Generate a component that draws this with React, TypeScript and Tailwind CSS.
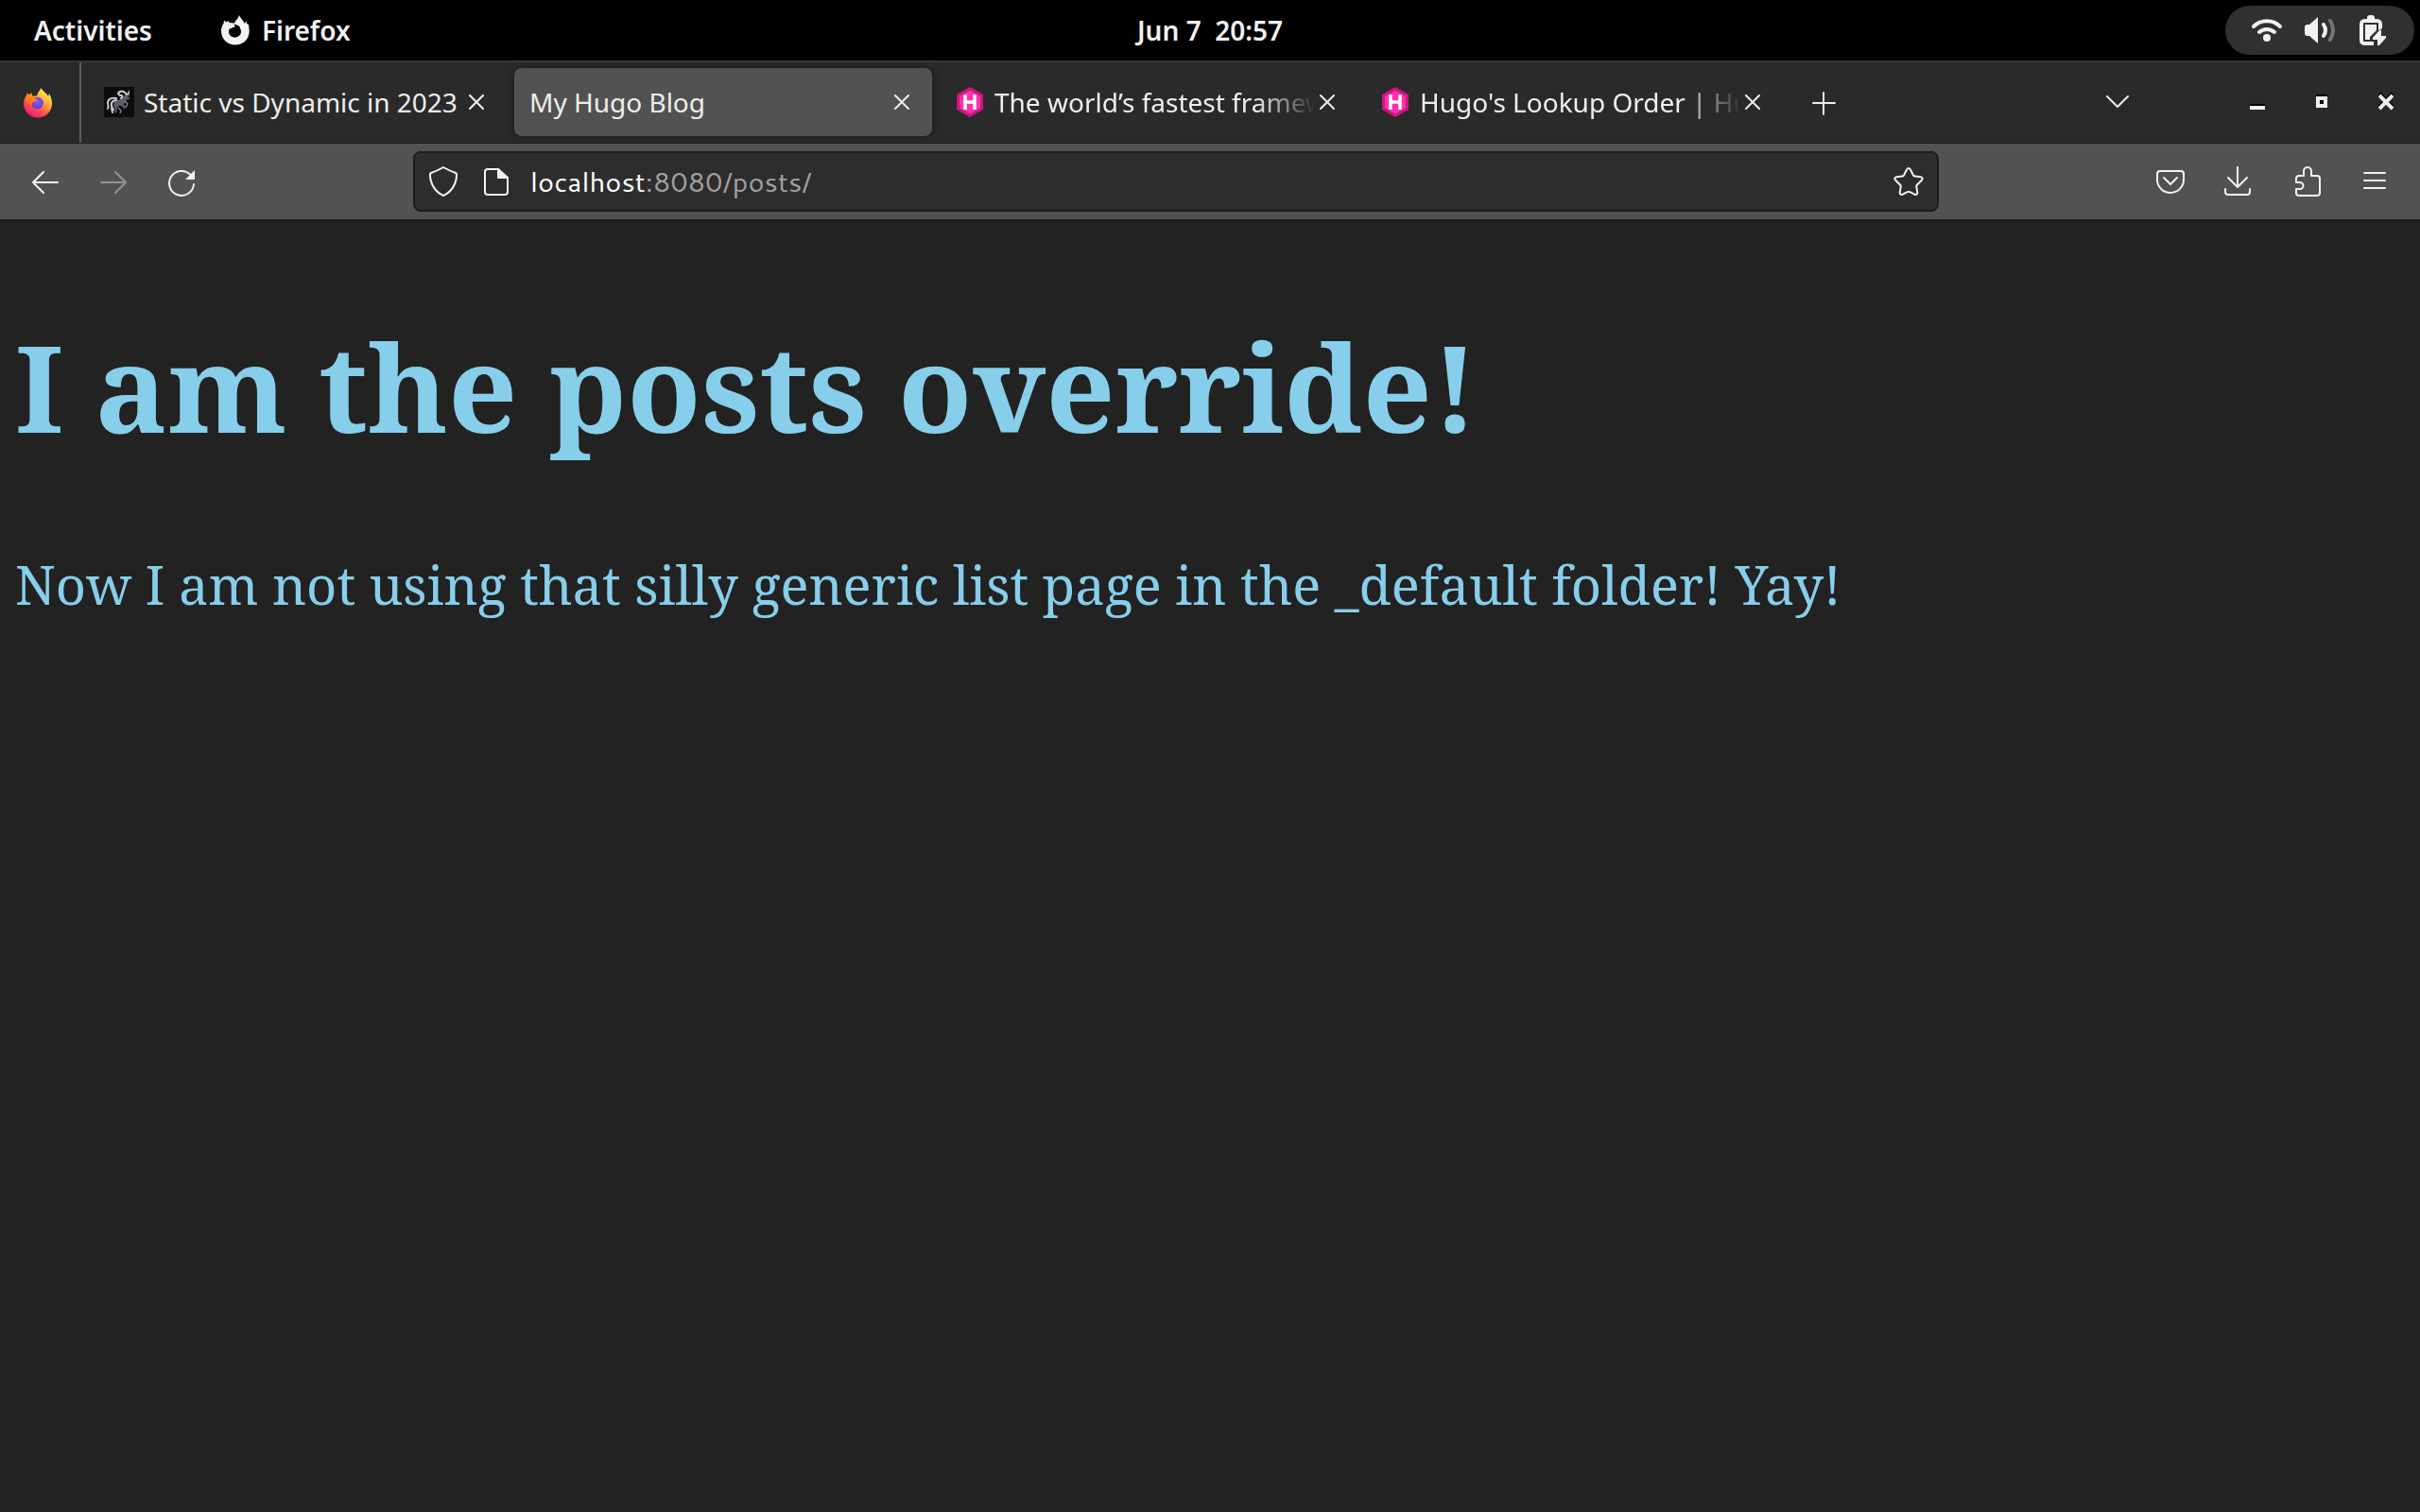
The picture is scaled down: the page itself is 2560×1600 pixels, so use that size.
import type { ReactNode } from 'react';

const tabs = [
  { title: 'Static vs Dynamic in 2023', icon: 'unicorn', active: false, fade: false },
  { title: 'My Hugo Blog', icon: null, active: true, fade: false },
  { title: 'The world’s fastest framework', icon: 'hugo', active: false, fade: true },
  { title: "Hugo's Lookup Order | Hugo", icon: 'hugo', active: false, fade: true },
];

function FirefoxLogo() {
  return (
    <svg viewBox="0 0 32 32" className="size-8">
      <defs>
        <linearGradient id="fx-body" x1="0.85" y1="0.1" x2="0.3" y2="1">
          <stop offset="0" stopColor="#fff44f" />
          <stop offset="0.4" stopColor="#ffa436" />
          <stop offset="0.7" stopColor="#ff4a4f" />
          <stop offset="1" stopColor="#e8177f" />
        </linearGradient>
        <radialGradient id="fx-globe" cx="0.5" cy="0.4" r="0.6">
          <stop offset="0" stopColor="#9059ff" />
          <stop offset="1" stopColor="#5b3fc9" />
        </radialGradient>
        <linearGradient id="fx-head" x1="0" y1="0" x2="0" y2="1">
          <stop offset="0" stopColor="#ff980e" />
          <stop offset="1" stopColor="#ff6a2f" />
        </linearGradient>
      </defs>
      <path
        fill="url(#fx-body)"
        d="M4 8 5 5.500 7 7.500 9 5.500 10 8.500 15 8.500C15.500 5 18 3.500 19.500 0c1.500 3.500 6 5.500 7.500 9l1-3c2 3.500 3 7 3 10.500C31 25 24.500 31.500 16 31.500S1 25 1 16.500C1 13 2 10.500 4 8Z"
      />
      <circle cx="15.500" cy="16" r="6.300" fill="url(#fx-globe)" />
      <path fill="url(#fx-head)" d="M3 12 5 6l2 2 3-2.500V9l6 4c-1 1.500-3 1.500-4.500 2-1.500.600-1.500 2.500-2.500 3.500-2-1.500-5-3-6-6.500Z" />
    </svg>
  );
}

function FirefoxSymbol() {
  return (
    <svg viewBox="0 0 32 32" className="size-8">
      <path
        fill="#f2f2f2"
        fillRule="evenodd"
        d="M3.500 9 4 5.500 6.500 7.500 8.500 6l1 2 5.500.500C16 5.500 19 4 20 0c1.500 3.500 4.500 6 6 9l1.500-3 .500 3 2 1 .500 4c1.500 10-5.500 17.500-14.500 17.500S1 25 1 16.500C1 13.500 2 11 3.500 9ZM15 12.500l-5 2c-1 1-1 2-1 3.500 0 3 3 5.500 6.500 5.500s6.500-2.500 6.500-6c0-2-.600-3.500-2-4.500l1.200.200C20 11 17.500 9.800 14 9.800l2 2Z"
      />
    </svg>
  );
}

function Unicorn() {
  return (
    <svg viewBox="0 0 32 32" className="size-8 shrink-0">
      <rect width="32" height="32" fill="#0c0c0c" />
      <path
        d="M11 15c4-2 7-1 9-3l2-4 4 2 1.500 3-4 .500c-.500 2.500-1.500 4-3 5l2.500 2-2 4-1-3.500-4-1.500-2 3-1 5-2-.500 1-4-2-3Z"
        fill="#5e5c69"
      />
      <path d="m24 8 3-5-.500 6Z" fill="#d2d2d6" />
      <path
        d="M24 8c-2-3-5-4-7-3-3 1-2 4 1 4 2 0 2 2 0 3M13 12c-4-1-8 0-9 4-.500 3 2 4 0 7M13 14c-3 0-6 2-5 6 .500 2 1 3 2 4M8 22l1 5"
        fill="none"
        stroke="#cfd0d8"
        strokeWidth="2"
        strokeLinecap="round"
      />
      <path d="M15 22l3 3-1 3M22 15l3 3-2 4" fill="none" stroke="#7a7885" strokeWidth="1.500" />
    </svg>
  );
}

function Hugo() {
  return (
    <svg viewBox="0 0 32 32" className="size-8 shrink-0">
      <path d="M16 0 30 8v16l-14 8L2 24V8Z" fill="#c9177e" />
      <path d="M16 3.500 27 9.800v12.400l-11 6.300-11-6.300V9.800Z" fill="#ff2fae" />
      <path d="M11 8v16M21 8v16M11 16h10" stroke="#fff" strokeWidth="3.500" fill="none" />
    </svg>
  );
}

function Line({ children }: { children: ReactNode }) {
  return (
    <svg
      viewBox="0 0 32 32"
      className="size-8"
      fill="none"
      stroke="currentColor"
      strokeWidth="2"
      strokeLinecap="round"
      strokeLinejoin="round"
    >
      {children}
    </svg>
  );
}

function TopBar() {
  return (
    <header className="grid h-16 grid-cols-3 items-center bg-black text-[28px] font-semibold text-[#f2f2f2]">
      <div className="flex items-center gap-[72px] pl-9">
        <button>Activities</button>
        <button className="flex items-center gap-3">
          <FirefoxSymbol />
          Firefox
        </button>
      </div>
      <button className="justify-self-center whitespace-pre">Jun 7  20:57</button>
      <button className="mr-[6px] flex h-[52px] items-center gap-6 justify-self-end rounded-full bg-[#303030] px-7" aria-label="System">
        <svg viewBox="0 0 32 32" className="size-8" fill="none" stroke="#f2f2f2" strokeWidth="4" strokeLinecap="round">
          <path d="M2 12a20 20 0 0 1 28 0M8 18a12 12 0 0 1 16 0" />
          <circle cx="16" cy="24" r="4" fill="#f2f2f2" stroke="none" />
        </svg>
        <svg viewBox="0 0 32 32" className="size-8" fill="none" stroke="#f2f2f2" strokeLinecap="round">
          <path d="M0 13q0-3 3-3h2l9-8v28l-9-8H3q-3 0-3-3Z" fill="#f2f2f2" stroke="none" />
          <path d="M20 10q4 6 0 12" strokeWidth="4" />
          <path d="M27 6q6 10 0 20" strokeWidth="4" stroke="#757575" />
        </svg>
        <svg viewBox="0 0 32 32" className="size-8">
          <path d="M10 3q0-3 3-3h2q3 0 3 3v1h2q6 0 6 6v4l-4 2V9q0-1-1-1H7Q6 8 6 9v18q0 1 1 1h10v4H8q-6 0-6-6V10q0-6 6-6h2Z" fill="#f2f2f2" />
          <path d="M8 10h12v6l-7 7v3H8Z" fill="#f2f2f2" />
          <path d="m24 15-8 9v2h5v6h2l7-8v-2h-5v-6Z" fill="#f2f2f2" />
        </svg>
      </button>
    </header>
  );
}

function Tab({ tab }: { tab: (typeof tabs)[number] }) {
  return (
    <div
      className={`flex h-[72px] w-[442px] items-center rounded-lg pr-6 pl-4 ${
        tab.active ? 'bg-[#525252] shadow-[0_0_8px_rgba(0,0,0,0.4)]' : ''
      }`}
    >
      <button className="flex min-w-0 flex-1 items-center gap-[10px] text-left">
        {tab.icon === 'unicorn' && <Unicorn />}
        {tab.icon === 'hugo' && <Hugo />}
        <span
          className={`min-w-0 flex-1 overflow-hidden whitespace-nowrap ${
            tab.fade ? '[mask-image:linear-gradient(to_left,transparent,black_64px)]' : ''
          }`}
        >
          {tab.title}
        </span>
      </button>
      <button className="ml-1" aria-label={`Close ${tab.title}`}>
        <svg viewBox="0 0 16 16" className="size-4" stroke="currentColor" strokeWidth="2" strokeLinecap="round">
          <path d="m1 1 14 14M15 1 1 15" />
        </svg>
      </button>
    </div>
  );
}

function TabStrip() {
  return (
    <div className="flex h-[88px] items-stretch border-t-2 border-b border-t-[#383838] border-b-[#1c1c1c] bg-[#2a2a2a] text-[28px] text-[#eeeeec]">
      <button className="w-[86px] border-r-2 border-[#5c5c5c] pl-6" aria-label="Firefox">
        <FirefoxLogo />
      </button>
      <nav className="flex items-start gap-2 pt-[6px] pl-2">
        {tabs.map((tab) => (
          <Tab key={tab.title} tab={tab} />
        ))}
      </nav>
      <button className="ml-[27px]" aria-label="New tab">
        <Line>
          <path d="M16 5v23M5 16h23" />
        </Line>
      </button>
      <div className="ml-auto flex items-center pr-7 pb-[2px]">
        <button className="mr-32" aria-label="List all tabs">
          <svg viewBox="0 0 24 16" className="h-4 w-6" fill="none" stroke="currentColor" strokeWidth="2" strokeLinecap="round" strokeLinejoin="round">
            <path d="M1 2 12 13 23 2" />
          </svg>
        </button>
        <button className="mr-[54px]" aria-label="Minimize">
          <svg viewBox="0 0 16 20" className="h-5 w-4">
            <path d="M0 12h16v2H0Z" fill="#000" />
            <path d="M0 14h16v4H0Z" fill="currentColor" />
          </svg>
        </button>
        <button className="mr-[54px]" aria-label="Maximize">
          <svg viewBox="0 0 12 20" className="h-5 w-3">
            <path d="M0 2h12v2H0ZM4 8h4v4H4Z" fill="#000" />
            <path d="M0 4h12v12H0ZM4 8v4h4V8Z" fill="currentColor" fillRule="evenodd" />
          </svg>
        </button>
        <button aria-label="Close window">
          <svg viewBox="0 0 16 20" className="h-5 w-4" fill="none" strokeWidth="4">
            <path d="m1 1 14 14M15 1 1 15" stroke="#000" />
            <path d="m1 3 14 14M15 3 1 17" stroke="currentColor" />
          </svg>
        </button>
      </div>
    </div>
  );
}

function Toolbar() {
  return (
    <div className="flex h-20 items-center bg-[#525252] text-[#f2f2f2]">
      <div className="flex w-[437px] shrink-0 items-center gap-10 pl-8">
        <button aria-label="Back">
          <Line>
            <path d="M3 17h26M14 6 3 17l11 11" />
          </Line>
        </button>
        <button aria-label="Forward" disabled className="text-[#929292]">
          <Line>
            <path d="M3 17h26M18 6l11 11-11 11" />
          </Line>
        </button>
        <button aria-label="Reload">
          <Line>
            <path d="M25 8.500A13 13 0 1 0 29 19" />
            <path d="M30 4v10H20Z" fill="currentColor" stroke="none" />
          </Line>
        </button>
      </div>
      <form className="flex h-16 min-w-0 flex-1 items-center rounded-lg border-2 border-[#1c1c1c] bg-[#2d2d2d] px-[14px]">
        <button type="button" aria-label="Tracking protection">
          <Line>
            <path d="M16 1Q23 5 29 7q1 0 1 2c0 9-5 18-14 22C7 27 2 18 2 9q0-2 1-2 6-2 13-6Z" />
          </Line>
        </button>
        <button type="button" className="ml-6" aria-label="Site information">
          <Line>
            <path d="M18 3H7a3 3 0 0 0-3 3v21a3 3 0 0 0 3 3h18a3 3 0 0 0 3-3V12Z" />
            <path d="M18 3v9h9Z" fill="currentColor" />
          </Line>
        </button>
        <a href="#posts" className="ml-5 flex-1 font-['Cantarell','Noto_Sans',sans-serif] text-[29px] text-[#a0a0a0]">
          <span className="text-white">localhost</span>:8080/posts/
        </a>
        <button type="button" aria-label="Bookmark this page">
          <Line>
            <path d="M14 3.500q2-3 4 0l3 6q.500 1 2 1l5.500.700q3.500.800 1.300 3.500l-5 5q-.800.800-.500 2l1 6q0 3-3 2l-5-2.500q-1.300-.600-2.600 0l-5 2.500q-3 1-3-2l1-6q.300-1.200-.500-2l-5-5q-2.200-2.700 1.300-3.500l5.500-.700q1.500 0 2-1Z" />
          </Line>
        </button>
      </form>
      <div className="flex w-[509px] shrink-0 items-center justify-end gap-10 pr-8">
        <button aria-label="Save to Pocket">
          <Line>
            <path d="M5 5h22a3 3 0 0 1 3 3v6a14 14 0 0 1-28 0V8a3 3 0 0 1 3-3Z" />
            <path d="m9 12 7 7 7-7" />
          </Line>
        </button>
        <button aria-label="Downloads">
          <Line>
            <path d="M15 1v21M5 12l10 10 10-10M2 24v3a3 3 0 0 0 3 3h20a3 3 0 0 0 3-3v-3" />
          </Line>
        </button>
        <button aria-label="Extensions">
          <Line>
            <path d="M5 17v-4a3 3 0 0 1 3-3h5V5a4 4 0 0 1 8 0v5h6a3 3 0 0 1 3 3v15a3 3 0 0 1-3 3H8a3 3 0 0 1-3-3v-4h4a3 3 0 0 0 0-7Z" />
          </Line>
        </button>
        <button aria-label="Open application menu">
          <Line>
            <path d="M5 7h22M5 15h22M5 23h22" />
          </Line>
        </button>
      </div>
    </div>
  );
}

export default function App() {
  return (
    <div className="flex min-h-screen flex-col bg-[#222222] font-['Noto_Sans',sans-serif]">
      <TopBar />
      <TabStrip />
      <Toolbar />
      <main className="flex-1 border-t-2 border-[#1c1c1c] px-4 font-['Noto_Serif','DejaVu_Serif',serif] text-[56px] text-[#87ceeb]">
        <h1 className="mt-[88px] text-[128px] leading-[174px] font-bold">I am the posts override!</h1>
        <p className="mt-[82px] leading-[80px]">Now I am not using that silly generic list page in the _default folder! Yay!</p>
      </main>
    </div>
  );
}
